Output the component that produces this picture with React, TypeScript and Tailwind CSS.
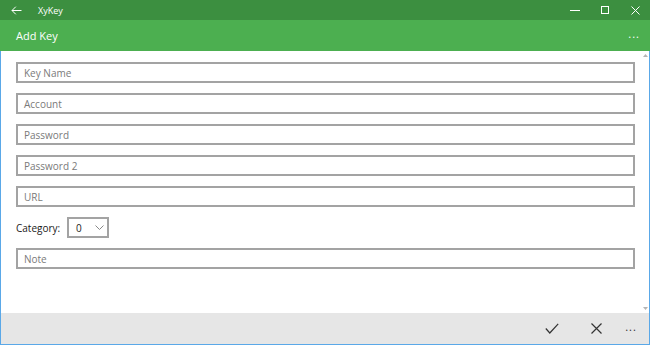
import React from "react";

const font = { fontFamily: '"Segoe UI", "Open Sans", "Noto Sans", sans-serif' };

function Field({ label }: { label: string }) {
  return (
    <div className="h-[21px] w-full border-2 border-[#a3a3a3] bg-white flex items-center pl-[6px]">
      <span className="text-[10px] leading-none text-[#7a7a7a]">{label}</span>
    </div>
  );
}

export default function App() {
  return (
    <div className="w-[650px] h-[345px] flex flex-col bg-white overflow-hidden" style={font}>
      {/* title bar */}
      <div className="h-[20px] bg-[#3c8f40] flex items-center text-white shrink-0">
        <div className="w-[32px] flex justify-center">
          <svg width="11" height="9" viewBox="0 0 11 9" fill="none" stroke="white" strokeWidth="1">
            <path d="M10.5 4.5H1M4.8 0.7L1 4.5l3.8 3.8" />
          </svg>
        </div>
        <span className="ml-[6px] text-[9px] leading-none">XyKey</span>
        <div className="flex-1" />
        <div className="w-[30px] flex justify-center">
          <div className="w-[10px] h-px bg-white" />
        </div>
        <div className="w-[30px] flex justify-center">
          <div className="w-[8px] h-[8px] border border-white" />
        </div>
        <div className="w-[30px] flex justify-center">
          <svg width="9" height="9" viewBox="0 0 9 9" stroke="white" strokeWidth="1">
            <path d="M0.5 0.5l8 8M8.5 0.5l-8 8" />
          </svg>
        </div>
      </div>
      {/* header */}
      <div className="h-[31px] bg-[#4caf50] flex items-center text-white shrink-0">
        <span className="ml-[16px] text-[11px] leading-none">Add Key</span>
        <div className="flex-1" />
        <span className="mr-[10px] text-[11px] leading-none tracking-[1px] -mt-[4px]">...</span>
      </div>
      {/* content */}
      <div className="flex-1 flex border-l border-r border-[#5aa8e8] min-h-0">
        <div className="flex-1 pl-[15px] pr-[7px] pt-[11px] flex flex-col gap-[10px]">
          <Field label="Key Name" />
          <Field label="Account" />
          <Field label="Password" />
          <Field label="Password 2" />
          <Field label="URL" />
          <div className="h-[21px] flex items-center">
            <span className="text-[10px] leading-none text-[#1a1a1a] w-[51px]">Category:</span>
            <div className="h-[21px] w-[42px] border-2 border-[#a3a3a3] flex items-center pl-[7px]">
              <span className="text-[10px] leading-none text-[#222]">0</span>
              <svg className="ml-[13px]" width="9" height="5" viewBox="0 0 9 5" fill="none" stroke="#888" strokeWidth="1">
                <path d="M0.5 0.5l4 4 4-4" />
              </svg>
            </div>
          </div>
          <Field label="Note" />
        </div>
        <div className="w-[7px] flex flex-col items-center justify-between py-[3px]">
          <svg width="5" height="3" viewBox="0 0 5 3"><path d="M0 3L2.5 0 5 3z" fill="#b5b5b5" /></svg>
          <svg width="5" height="3" viewBox="0 0 5 3"><path d="M0 0L2.5 3 5 0z" fill="#b5b5b5" /></svg>
        </div>
      </div>
      {/* bottom command bar */}
      <div className="h-[32px] bg-[#e6e6e6] border-l border-r border-b border-[#5aa8e8] flex items-center justify-end shrink-0">
        <div className="w-[34px] mr-[10px] flex justify-center">
          <svg width="14" height="11" viewBox="0 0 14 11" fill="none" stroke="#333" strokeWidth="1.2">
            <path d="M0.8 5.5l4 4.5L13.2 0.8" />
          </svg>
        </div>
        <div className="w-[34px] flex justify-center">
          <svg width="11" height="11" viewBox="0 0 11 11" fill="none" stroke="#333" strokeWidth="1.2">
            <path d="M0.5 0.5l10 10M10.5 0.5l-10 10" />
          </svg>
        </div>
        <div className="w-[36px] flex justify-center">
          <span className="text-[11px] text-[#333] leading-none tracking-[1px] -mt-[4px]">...</span>
        </div>
      </div>
    </div>
  );
}
